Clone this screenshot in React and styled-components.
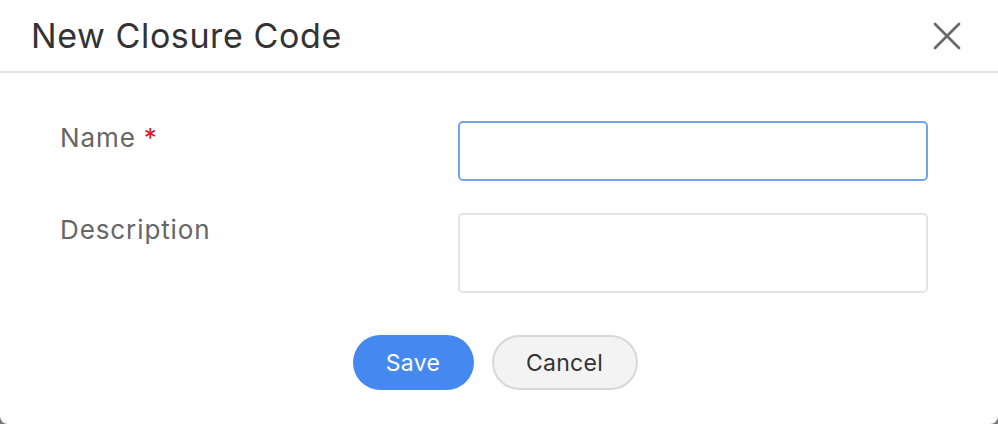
import React from "react";
import styled, { createGlobalStyle } from "styled-components";

const Global = createGlobalStyle`
  html, body { margin: 0; padding: 0; background: #7a7a7a; }
  body { font-family: Inter, "Noto Sans", sans-serif; }
  * { box-sizing: border-box; }
`;

const Dialog = styled.div`
  width: 998px;
  height: 424px;
  background: #fff;
  border-radius: 0 0 8px 8px;
  display: flex;
  flex-direction: column;
`;

const Header = styled.div`
  height: 73px;
  border-bottom: 2px solid #e6e6e6;
  display: flex;
  align-items: center;
  justify-content: space-between;
  padding: 0 36px 0 31px;
`;

const Title = styled.h1`
  margin: 0;
  font-size: 34px;
  font-weight: 400;
  color: #333;
  letter-spacing: 0.6px;
`;

const CloseButton = styled.button`
  border: 0;
  background: none;
  padding: 0;
  width: 30px;
  height: 30px;
  display: flex;
  align-items: center;
  justify-content: center;
  cursor: pointer;
`;

const Form = styled.div`
  display: grid;
  grid-template-columns: 398px 470px;
  row-gap: 32px;
  padding: 48px 0 0 60px;
`;

const Label = styled.label`
  font-size: 26px;
  line-height: 32px;
  color: #666;
  letter-spacing: 0.9px;
  padding-top: 1px;
`;

const Required = styled.span`
  color: #e8141b;
  margin-left: 8px;
`;

const Input = styled.input`
  height: 60px;
  border: 2px solid ${(p) => (p.$focused ? "#73a3ec" : "#e4e4e4")};
  border-radius: 5px;
  outline: none;
  font: inherit;
  padding: 0 12px;
`;

const TextArea = styled.textarea`
  height: 80px;
  border: 2px solid #e4e4e4;
  border-radius: 5px;
  outline: none;
  resize: none;
  font: inherit;
`;

const Actions = styled.div`
  display: flex;
  justify-content: center;
  gap: 18px;
  padding: 42px 8px 0 0;
`;

const Button = styled.button`
  height: 55px;
  border-radius: 28px;
  font-family: inherit;
  font-size: 23px;
  letter-spacing: 0.3px;
  cursor: pointer;
  padding: 0;
  width: ${(p) => (p.$primary ? "121px" : "146px")};
  background: ${(p) => (p.$primary ? "#4589f0" : "#f3f3f3")};
  color: ${(p) => (p.$primary ? "#fff" : "#333")};
  border: ${(p) => (p.$primary ? "0" : "2px solid #d8d8d8")};
`;

export default function App() {
  return (
    <>
      <Global />
      <Dialog>
        <Header>
          <Title>New Closure Code</Title>
          <CloseButton aria-label="Close">
            <svg width="28" height="28" viewBox="0 0 28 28">
              <path d="M2 2 L26 26 M26 2 L2 26" stroke="#6b6b6b" strokeWidth="2.8" strokeLinecap="round" />
            </svg>
          </CloseButton>
        </Header>
        <Form>
          <Label>
            Name<Required>*</Required>
          </Label>
          <Input $focused />
          <Label>Description</Label>
          <TextArea />
        </Form>
        <Actions>
          <Button $primary>Save</Button>
          <Button>Cancel</Button>
        </Actions>
      </Dialog>
    </>
  );
}
